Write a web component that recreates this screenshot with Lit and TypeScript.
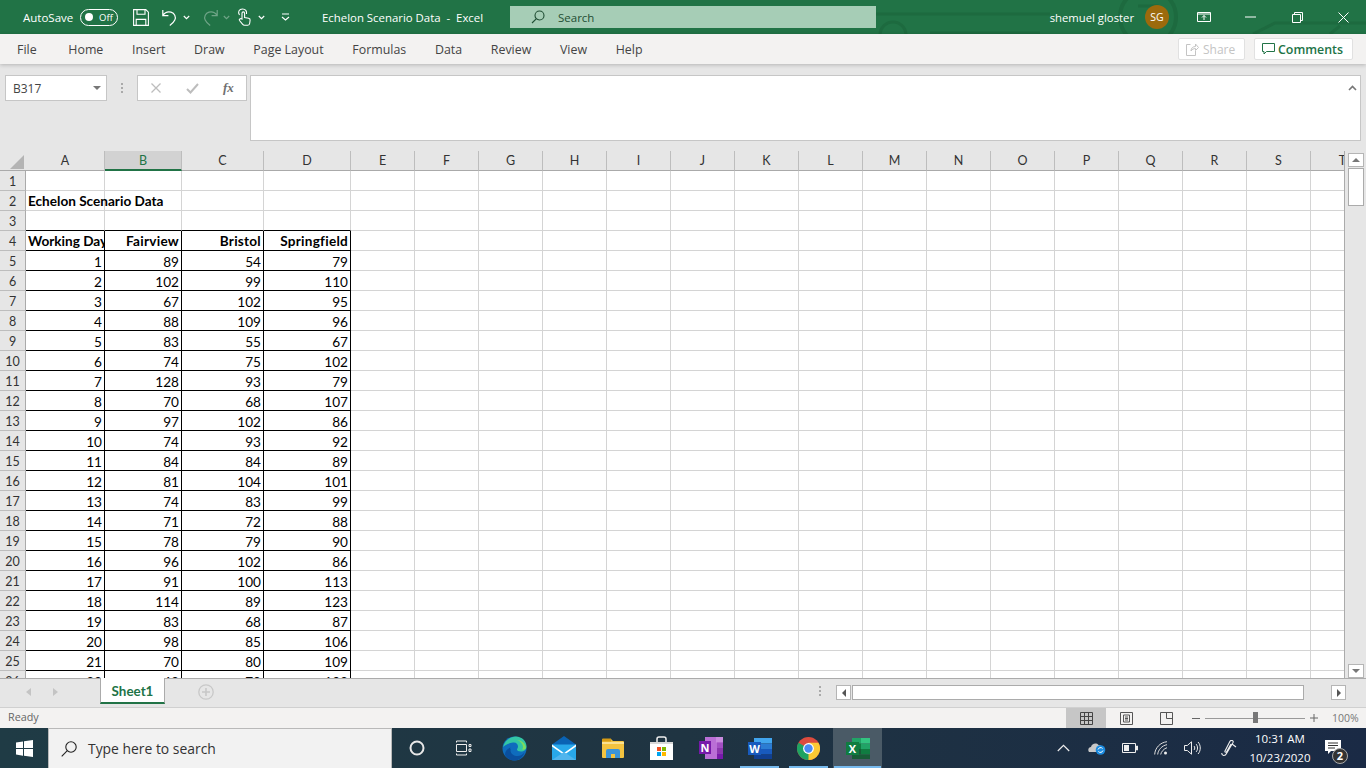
import { LitElement, html, css, svg } from "lit";
import { customElement } from "lit/decorators.js";

const COLS = [
  ["A", 79], ["B", 77], ["C", 82], ["D", 87], ["E", 64], ["F", 64], ["G", 64], ["H", 64], ["I", 64], ["J", 64],
  ["K", 64], ["L", 64], ["M", 64], ["N", 64], ["O", 64], ["P", 64], ["Q", 64], ["R", 64], ["S", 64], ["T", 64],
] as [string, number][];

const DATA = [
  [89, 54, 79], [102, 99, 110], [67, 102, 95], [88, 109, 96], [83, 55, 67], [74, 75, 102], [128, 93, 79],
  [70, 68, 107], [97, 102, 86], [74, 93, 92], [84, 84, 89], [81, 104, 101], [74, 83, 99], [71, 72, 88],
  [78, 79, 90], [96, 102, 86], [91, 100, 113], [114, 89, 123], [83, 68, 87], [98, 85, 106], [70, 80, 109],
  [63, 70, 103],
];

const TABS = ["File", "Home", "Insert", "Draw", "Page Layout", "Formulas", "Data", "Review", "View", "Help"];

const caret = svg`<svg width="7" height="5" viewBox="0 0 7 5"><path d="M.8 1l2.7 2.6L6.2 1" fill="none" stroke="currentColor" stroke-width="1.2"/></svg>`;

@customElement("app-root")
export class AppRoot extends LitElement {
  static styles = css`
    :host {
      display: flex;
      flex-direction: column;
      width: 1366px;
      height: 768px;
      overflow: hidden;
      font-family: "Open Sans", "Noto Sans", sans-serif;
      color: #444;
      background: #e6e6e6;
    }
    svg { display: block; flex: none; }

    /* title bar */
    .title {
      position: relative;
      flex: none;
      height: 34px;
      background: #217346;
      color: #fff;
      display: flex;
      align-items: center;
      font-size: 11.5px;
      overflow: hidden;
    }
    .title > * { position: relative; }
    .title .decor { position: absolute; left: 0; top: 0; }
    .autosave { margin-left: 23px; width: 57px; font-size: 11.5px; }
    .toggle {
      height: 15px;
      border: 1px solid #fff;
      border-radius: 9px;
      display: flex;
      align-items: center;
      padding-left: 4px;
      gap: 6px;
      font-size: 9.5px;
      box-sizing: content-box;
      width: 32px;
    }
    .toggle i { width: 8px; height: 8px; border-radius: 50%; background: #fff; flex: none; }
    .qat-save { margin-left: 15px; }
    .qat-undo { margin-left: 13px; }
    .c1 { margin-left: 6px; }
    .qat-redo { margin-left: 13px; opacity: .35; }
    .c2 { margin-left: 5px; opacity: .35; }
    .qat-touch { margin-left: 7px; }
    .c3 { margin-left: 7px; }
    .qat-more { margin-left: 16px; }
    .doc { margin-left: 32px; width: 188px; font-size: 11.4px; white-space: pre; }
    .search {
      width: 366px;
      height: 22px;
      background: #a6cdb6;
      color: #1f4d33;
      display: flex;
      align-items: center;
      gap: 13px;
      padding-left: 21px;
      box-sizing: border-box;
      font-size: 11.5px;
    }
    .user { margin-left: auto; font-size: 11.3px; }
    .avatar {
      margin-left: 11px;
      width: 24px;
      height: 24px;
      border-radius: 50%;
      background: #9c6a0c;
      display: flex;
      align-items: center;
      justify-content: center;
      font-size: 10.5px;
    }
    .win { display: flex; align-items: center; margin: 0 -1px 0 12px; }
    .win div { width: 46.5px; display: flex; justify-content: center; }

    /* ribbon tabs */
    .tabs {
      position: relative;
      z-index: 1;
      flex: none;
      height: 30px;
      background: #f3f2f1;
      box-shadow: 0 1px 4px rgba(0, 0, 0, .22);
      display: flex;
      align-items: center;
      gap: 28.7px;
      padding-left: 17px;
      font-size: 12.4px;
      color: #444;
    }
    .tabs > span:first-child { margin-right: 3px; }
    .btns { margin-left: auto; margin-right: 13px; display: flex; gap: 9px; }
    .btn {
      height: 22px;
      background: #fff;
      border: 1px solid #e1e1e1;
      border-radius: 2px;
      box-sizing: border-box;
      display: flex;
      align-items: center;
      gap: 4px;
      font-size: 12px;
    }
    .share { width: 67px; color: #c4c4c4; padding-left: 7px; }
    .comments { width: 99px; color: #217346; padding-left: 7px; gap: 3px; font-size: 12.4px; font-weight: 600; }

    /* formula bar */
    .fbar {
      flex: none;
      height: 87px;
      box-sizing: border-box;
      padding: 11px 5px 0;
      display: flex;
      align-items: flex-start;
    }
    .namebox {
      width: 102px;
      height: 26px;
      box-sizing: border-box;
      background: #fff;
      border: 1px solid #c6c6c6;
      display: flex;
      align-items: center;
      justify-content: space-between;
      padding: 0 5px 0 7px;
      font-size: 12px;
    }
    .arrow { width: 0; height: 0; border: 4px solid transparent; border-top: 4px solid #777; border-bottom: 0; }
    .dots { width: 30px; display: flex; justify-content: center; padding-top: 8px; }
    .fx {
      width: 110px;
      height: 26px;
      box-sizing: border-box;
      background: #fff;
      border: 1px solid #c6c6c6;
      display: flex;
      align-items: center;
      padding-left: 12px;
      gap: 24px;
    }
    .fx em { font: italic bold 13px "Liberation Serif", serif; color: #707070; }
    .finput {
      margin-left: 3px;
      flex: 1;
      height: 66px;
      box-sizing: border-box;
      background: #fff;
      border: 1px solid #c6c6c6;
      display: flex;
      justify-content: flex-end;
      padding: 9px 3px 0 0;
    }

    /* sheet */
    .sheet { flex: 1; min-height: 0; display: flex; }
    .gridwrap { width: 1345px; overflow: hidden; box-sizing: border-box; border-right: 1px solid #ababab; }
    .grid {
      display: grid;
      grid-auto-rows: 20px;
      font: 13.6px/20px Lato, "Liberation Sans", sans-serif;
      font-variant-ligatures: none;
      color: #000;
    }
    .corner { background: #e6e6e6; display: flex; align-items: flex-end; justify-content: flex-end; padding: 0 2px 1px 0; box-sizing: border-box; border-bottom: 1px solid #aaa; }
    .ch {
      background: #e6e6e6;
      border-right: 1px solid #bdbdbd;
      border-bottom: 1px solid #aaa;
      box-sizing: border-box;
      text-align: center;
      color: #333;
      font-size: 12.5px;
      line-height: 19px;
      overflow: hidden;
    }
    .ch.sel { background: #d2d2d2; color: #217346; border-bottom: 2px solid #217346; }
    .rh {
      background: #e6e6e6;
      border-bottom: 1px solid #bdbdbd;
      border-right: 1px solid #aaa;
      box-sizing: border-box;
      color: #333;
      font-size: 12.5px;
      line-height: 21px;
      text-align: center;
      overflow: hidden;
    }
    .cell {
      background: #fff;
      border-right: 1px solid #d4d4d4;
      border-bottom: 1px solid #d4d4d4;
      box-sizing: border-box;
      padding: 0 2px;
      white-space: nowrap;
      line-height: 22px;
    }
    .num { text-align: right; }
    .b { font-weight: 700; line-height: 21px; }
    .b.num { letter-spacing: .25px; }
    .r { border-right-color: #000; }
    .u { border-bottom-color: #000; }
    .clip { overflow: hidden; }
    .over { overflow: visible; position: relative; z-index: 1; }

    .vscroll {
      flex: 1;
      display: flex;
      flex-direction: column;
      align-items: center;
      padding-top: 2px;
    }
    .sbtn {
      width: 16px;
      height: 14px;
      background: #fff;
      border: 1px solid #b5b5b5;
      box-sizing: border-box;
      display: flex;
      align-items: center;
      justify-content: center;
    }
    .thumb {
      width: 16px;
      height: 38px;
      margin-top: 1px;
      background: #fff;
      border: 1px solid #ababab;
      box-sizing: border-box;
    }
    .vscroll .sbtn.down { margin-top: auto; }
    .up { width: 0; height: 0; border: 4px solid transparent; border-bottom: 4px solid #777; border-top: 0; }
    .dn { width: 0; height: 0; border: 4px solid transparent; border-top: 4px solid #777; border-bottom: 0; }
    .lf { width: 0; height: 0; border: 4px solid transparent; border-right: 4px solid #555; border-left: 0; }
    .rt { width: 0; height: 0; border: 4px solid transparent; border-left: 4px solid #555; border-right: 0; }

    /* sheet tabs */
    .sheetbar {
      flex: none;
      height: 29px;
      box-sizing: border-box;
      border-top: 1px solid #ababab;
      display: flex;
      align-items: flex-start;
      background: #e6e6e6;
    }
    .nav { width: 100px; display: flex; padding: 9px 0 0 26px; box-sizing: border-box; gap: 22px; }
    .nav i { width: 0; height: 0; border: 4px solid transparent; }
    .nav i.l { border-right: 5px solid #c4c4c4; border-left: 0; }
    .nav i.g { border-left: 5px solid #c4c4c4; border-right: 0; }
    .stab {
      margin-top: -1px;
      width: 65px;
      height: 26px;
      box-sizing: border-box;
      background: #fff;
      border-left: 1px solid #ababab;
      border-right: 1px solid #ababab;
      border-bottom: 2px solid #217346;
      color: #217346;
      font: 700 13.4px/26px Lato, sans-serif;
      text-align: center;
    }
    .plus { margin: 5px 0 0 33px; }
    .vdots { margin: 7px 0 0 598px; width: 24px; padding-left: 7px; box-sizing: border-box; display: flex; }
    .hscroll { display: flex; margin-top: 6px; }
    .hscroll .sbtn { width: 15px; height: 15px; }
    .hthumb { width: 452px; height: 15px; background: #fff; border: 1px solid #ababab; box-sizing: border-box; margin-left: 1px; }
    .hscroll .gap { width: 27px; }

    /* status */
    .status {
      flex: none;
      height: 21px;
      border-top: 1px solid #d0d0d0;
      box-sizing: border-box;
      background: #f3f2f1;
      display: flex;
      align-items: center;
      padding-left: 8px;
      font-size: 10.8px;
      line-height: 18px;
      color: #666;
    }
    .ready { margin-top: -2px; }
    .views { margin-left: auto; display: flex; align-self: stretch; }
    .views div { width: 40px; display: flex; align-items: center; justify-content: center; }
    .views .on { background: #c6c6c6; }
    .zoom { display: flex; align-items: center; margin-left: 6px; width: 174px; }
    .zoom .track { position: relative; width: 100px; height: 1px; background: #999; margin: 0 5px; }
    .zoom .track i { position: absolute; left: 48px; top: -6px; width: 5px; height: 11px; background: #777; }
    .pct { margin-left: 14px; font-size: 10.5px; color: #777; }

    /* taskbar */
    .taskbar {
      flex: none;
      height: 40px;
      background: linear-gradient(90deg, #1f3b45, #1f3442 50%, #1a2a45);
      display: flex;
      align-items: stretch;
      color: #fff;
    }
    .start { width: 48px; display: flex; align-items: center; justify-content: center; }
    .tsearch {
      width: 344px;
      box-sizing: border-box;
      background: #f2f2f2;
      border: 1px solid #b9b9b9;
      border-bottom: 0;
      display: flex;
      align-items: center;
      gap: 11px;
      padding-left: 12px;
      color: #333;
      font-size: 13.9px;
    }
    .ti { position: relative; width: 49px; display: flex; align-items: center; justify-content: center; box-sizing: border-box; }
    .ti.open::after { content: ""; position: absolute; left: 5px; right: 5px; bottom: 0; height: 2px; background: #76b9ed; }
    .ti.active { background: #4a5a66; }
    .ti.active::after { left: 1px; right: 1px; }
    .tv { margin-right: 4px; }
    .tray { margin-left: auto; display: flex; align-items: center; }
    .ml18 { margin-left: 18px; }
    .ml16 { margin-left: 16px; }
    .ml20 { margin-left: 20px; }
    .clock { width: 62px; text-align: center; font-size: 11.5px; line-height: 19px; margin-left: 12px; }
    .note { position: relative; margin: 0 17px 0 14px; width: 24px; height: 26px; }
    .note svg { margin-top: 5px; }
    .badge {
      position: absolute;
      left: 7px;
      top: 13px;
      width: 16px;
      height: 16px;
      box-sizing: border-box;
      border-radius: 50%;
      background: #333;
      border: 1px solid #aaa;
      font-size: 11px;
      font-weight: 700;
      line-height: 14px;
      text-align: center;
    }
  `;

  private titleBar() {
    return html`<div class="title">
      <svg class="decor" width="1366" height="34" fill="none" stroke="#1d6a3f" stroke-width="3">
        <path d="M876 14H1050M930 33H1040"/>
        <circle cx="893" cy="35" r="13"/>
        <circle cx="1148" cy="17" r="28" stroke-width="4"/>
        <path d="M1138 6h18l-8 14M1253 34l22-11h91M1330 34l10-8"/>
      </svg>
      <span class="autosave">AutoSave</span>
      <span class="toggle"><i></i>Off</span>
      <svg class="qat-save" width="16" height="17" viewBox="0 0 16 17" fill="none" stroke="#fff" stroke-width="1.1">
        <path d="M.6.6h12.2l2.6 2.6v13.2H.6zM4 .6v4.6h8V.6M3.2 16.4v-6h9.6v6"/>
      </svg>
      <svg class="qat-undo" width="15" height="17" viewBox="0 0 15 17" fill="none" stroke="#fff" stroke-width="1.2">
        <path d="M.8 1v5.6h5.6M1 6.4C3 3.4 6 2.4 9 3.2c3.600 1 5.200 4.600 3.800 7.800-.8 1.800-3 4-5 5.400"/>
      </svg>
      <span class="c1">${caret}</span>
      <svg class="qat-redo" width="15" height="17" viewBox="0 0 15 17" fill="none" stroke="#fff" stroke-width="1.2">
        <path d="M14.200 1v5.600H8.600M14 6.400C12 3.400 9 2.400 6 3.200 2.400 4.200.8 7.800 2.200 11c.8 1.800 3 4 5 5.400"/>
      </svg>
      <span class="c2">${caret}</span>
      <svg class="qat-touch" width="14" height="18" viewBox="0 0 14 18" fill="none" stroke="#fff" stroke-width="1.1">
        <path d="M2.500 7C.5 4 2 1 5.500 1 8.500 1 10 3 9.500 6"/>
        <path d="M5 11V5.200a1.300 1.300 0 012.600 0v4.300l4 .8c1 .2 1.600 1 1.500 2l-.4 3c-.1 1-.7 2-2 2H7.500c-1 0-1.500-.5-2-1.200l-3-3.600c-.8-1.200.8-2.500 2.500-1.500z"/>
      </svg>
      <span class="c3">${caret}</span>
      <svg class="qat-more" width="9" height="8" viewBox="0 0 9 8" fill="none" stroke="#fff" stroke-width="1.1">
        <path d="M1 1h7M1 4l3.500 3L8 4"/>
      </svg>
      <span class="doc">Echelon Scenario Data  -  Excel</span>
      <div class="search">
        <svg width="14" height="14" viewBox="0 0 14 14" fill="none" stroke="#1f4d33" stroke-width="1.1">
          <circle cx="8.500" cy="5.500" r="4.500"/><path d="M5.200 8.800L1 13"/>
        </svg>
        Search
      </div>
      <span class="user">shemuel gloster</span>
      <span class="avatar">SG</span>
      <div class="win">
        <div>
          <svg width="14" height="12" viewBox="0 0 14 12" fill="none" stroke="#fff" stroke-width="1">
            <path d="M.5 1.500h13v9H.5zM.5 3h13M7 9V4.500M5 6.500l2-2 2 2"/>
          </svg>
        </div>
        <div>
          <svg width="11" height="2"><path d="M0 1h11" stroke="#fff"/></svg>
        </div>
        <div>
          <svg width="11" height="11" fill="none" stroke="#fff"><path d="M.5 2.500h8v8h-8zM2.500 2.500v-2h8v8h-2"/></svg>
        </div>
        <div>
          <svg width="11" height="11" fill="none" stroke="#fff"><path d="M.5.500l10 10M10.500.500l-10 10"/></svg>
        </div>
      </div>
    </div>`;
  }

  private tabs() {
    return html`<div class="tabs">
      ${TABS.map((t) => html`<span>${t}</span>`)}
      <div class="btns">
        <div class="btn share">
          <svg width="13" height="13" viewBox="0 0 13 13" fill="none" stroke="#c4c4c4">
            <path d="M4.500 1.500H.5v11h9V8M5 8c0-3 2-4.500 4.500-4.500V1l3 3.500-3 3V5.500C7.500 5.500 6 6.500 5 8z"/>
          </svg>
          Share
        </div>
        <div class="btn comments">
          <svg width="13" height="12" viewBox="0 0 13 12" fill="none" stroke="#217346">
            <path d="M.5.500h12v8H4.500L2 11V8.500H.5z"/>
          </svg>
          Comments
        </div>
      </div>
    </div>`;
  }

  private formulaBar() {
    return html`<div class="fbar">
      <div class="namebox">B317<span class="arrow"></span></div>
      <div class="dots">
        <svg width="2" height="10"><path d="M1 0v2M1 4v2M1 8v2" stroke="#aaa" stroke-width="2"/></svg>
      </div>
      <div class="fx">
        <svg width="12" height="12" viewBox="0 0 12 12" fill="none" stroke="#bdbdbd" stroke-width="1.3"><path d="M1.500 1.500l9 9M10.500 1.500l-9 9"/></svg>
        <svg width="13" height="11" viewBox="0 0 13 11" fill="none" stroke="#bdbdbd" stroke-width="2"><path d="M1 6l3.500 3.500L12 1"/></svg>
        <em>fx</em>
      </div>
      <div class="finput">
        <svg width="9" height="6" viewBox="0 0 9 6" fill="none" stroke="#777" stroke-width="1.600"><path d="M1 5l3.500-3.500L8 5"/></svg>
      </div>
    </div>`;
  }

  private sheet() {
    const template = `26px ${COLS.map((c) => c[1] + "px").join(" ")}`;
    const blank = (row: number) =>
      COLS.map(([, ], i) => {
        // row 3 carries the top edge of the table
        const top = row === 3 && i < 4 ? "u" : "";
        return html`<div class="cell ${top}"></div>`;
      });
    return html`<div class="sheet">
      <div class="gridwrap">
        <div class="grid" style="grid-template-columns:${template}">
          <div class="corner">
            <svg width="14" height="14"><path d="M14 0v14H0z" fill="#b4b4b4"/></svg>
          </div>
          ${COLS.map(([c]) => html`<div class="ch ${c === "B" ? "sel" : ""}">${c}</div>`)}
          <div class="rh">1</div>${blank(1)}
          <div class="rh">2</div>
          <div class="cell b over">Echelon Scenario Data</div>
          ${blank(2).slice(1)}
          <div class="rh">3</div>${blank(3)}
          <div class="rh">4</div>
          <div class="cell b clip r u">Working Day</div>
          <div class="cell b num r u">Fairview</div>
          <div class="cell b num r u">Bristol</div>
          <div class="cell b num r u">Springfield</div>
          ${COLS.slice(4).map(() => html`<div class="cell"></div>`)}
          ${DATA.map(
            (d, i) => html`<div class="rh">${i + 5}</div>
              <div class="cell num r u">${i + 1}</div>
              ${d.map((v) => html`<div class="cell num r u">${v}</div>`)}
              ${COLS.slice(4).map(() => html`<div class="cell"></div>`)}`
          )}
        </div>
      </div>
      <div class="vscroll">
        <div class="sbtn"><i class="up"></i></div>
        <div class="thumb"></div>
        <div class="sbtn down"><i class="dn"></i></div>
      </div>
    </div>`;
  }

  private sheetBar() {
    return html`<div class="sheetbar">
      <div class="nav"><i class="l"></i><i class="g"></i></div>
      <div class="stab">Sheet1</div>
      <svg class="plus" width="16" height="16" viewBox="0 0 16 16" fill="none" stroke="#c8c8c8" stroke-width="1.300">
        <circle cx="8" cy="8" r="7.200"/><path d="M8 4v8M4 8h8" stroke-width="1.600"/>
      </svg>
      <div class="vdots">
        <svg width="2" height="10"><path d="M1 0v2M1 4v2M1 8v2" stroke="#aaa" stroke-width="2"/></svg>
      </div>
      <div class="hscroll">
        <div class="sbtn"><i class="lf"></i></div>
        <div class="hthumb"></div>
        <div class="gap"></div>
        <div class="sbtn"><i class="rt"></i></div>
      </div>
    </div>`;
  }

  private statusBar() {
    return html`<div class="status">
      <span class="ready">Ready</span>
      <div class="views">
        <div class="on">
          <svg width="13" height="13" fill="none" stroke="#444"><path d="M.5.500h12v12H.5zM.5 4.500h12M.5 8.500h12M4.500.500v12M8.500.500v12"/></svg>
        </div>
        <div>
          <svg width="13" height="13" fill="none" stroke="#555"><path d="M.5.500h12v12H.5zM3.500 3h6v7h-6zM5 5h3M5 6.500h3M5 8h3"/></svg>
        </div>
        <div>
          <svg width="13" height="13" fill="none" stroke="#555"><path d="M.5.500h12v12H.5zM6.500.500v6h6"/></svg>
        </div>
      </div>
      <div class="zoom">
        <svg width="8" height="1"><path d="M0 .5h8" stroke="#666"/></svg>
        <div class="track"><i></i></div>
        <svg width="8" height="8"><path d="M0 4h8M4 0v8" stroke="#666"/></svg>
        <span class="pct">100%</span>
      </div>
    </div>`;
  }

  private taskbar() {
    return html`<div class="taskbar">
      <div class="start">
        <svg width="17" height="17" viewBox="0 0 17 17" fill="#fff">
          <path d="M0 2.400L7 1.400v6.700H0zM8 1.200L17 0v8.100H8zM0 9h7v6.700L0 14.600zM8 9h9v8l-9-1.200z"/>
        </svg>
      </div>
      <div class="tsearch">
        <svg width="16" height="16" viewBox="0 0 16 16" fill="none" stroke="#222" stroke-width="1.100">
          <circle cx="10" cy="6" r="5.200"/><path d="M6.300 9.700L.7 15.300"/>
        </svg>
        Type here to search
      </div>
      <div class="ti">
        <svg width="16" height="16" fill="none" stroke="#e8e8e8" stroke-width="2"><circle cx="8" cy="8" r="6.500"/></svg>
      </div>
      <div class="ti">
        <svg class="tv" width="16" height="16" viewBox="0 0 16 16" fill="none" stroke="#eee">
          <path d="M.5 1h10M.5 15h10M.5 4.500h10v7H.5zM13 4.500h2v2h-2zM13 9h2v2.500h-2zM10.500 1v1.500M10.500 13.500V15M.5 1v1.500M.5 13.500V15"/>
        </svg>
      </div>
      <div class="ti">
        <svg width="25" height="25" viewBox="0 0 25 25">
          <circle cx="12.500" cy="12.500" r="12" fill="#0f6cbd"/>
          <path d="M1 11C3 3 10 .3 14 .5c6 .3 10.500 4.500 10.500 10 0 3-2.500 5-5.500 5-2.500 0-4-1-4-2 0-.8 1-1.200 1-3C16 8 14 6 11 6.500 6 7.300 3 9 1 11z" fill="#33c6a5"/>
          <path d="M24 12c-.5-5-5-8-9-8 3 1 6 4 6 7 0 1-.5 2-1 2.500 2 .5 4-.5 4-1.500z" fill="#7cdc5f"/>
          <path d="M8.500 14c0 4 3.500 6 7 6 2.500 0 5-1 7-3.500-1.500 5-6 8-10 8-4 0-8-2-9.500-6 0-3 2-6 5.500-7-.5 1-.5 1.500.5 2.500z" fill="#0a4f9e"/>
        </svg>
      </div>
      <div class="ti">
        <svg width="24" height="24" viewBox="0 0 24 24">
          <path d="M0 8.500L12 0l12 8.500V24H0z" fill="#0a63b4"/>
          <path d="M0 8.500h24V24H0z" fill="#28a8ea"/>
          <path d="M0 8.500L12 17l12-8.500v2L12 19 0 10.500z" fill="#fff"/>
          <path d="M0 24l12-8 12 8z" fill="#50b5ed"/>
        </svg>
      </div>
      <div class="ti">
        <svg width="22" height="20" viewBox="0 0 22 20">
          <path d="M0 2a1 1 0 011-1h8l2 2h10a1 1 0 011 1v15a1 1 0 01-1 1H1a1 1 0 01-1-1z" fill="#f3c340"/>
          <path d="M0 1.500a1 1 0 011-1h8v3H0z" fill="#d69b15"/>
          <path d="M0 4h22v2H0z" fill="#fbe190"/>
          <path d="M4 20v-7a2 2 0 012-2h10a2 2 0 012 2v7h-5v-4H9v4z" fill="#3b94d9"/>
        </svg>
      </div>
      <div class="ti">
        <svg width="23" height="24" viewBox="0 0 23 24">
          <path d="M7 6V3a2 2 0 012-2h5a2 2 0 012 2v3" fill="none" stroke="#eee" stroke-width="1.500"/>
          <path d="M0 6h23v18H0z" fill="#fff"/>
          <path d="M0 6h23v2H0z" fill="#d8d8d8"/>
          <path d="M7 11h4v4H7z" fill="#f25022"/><path d="M12 11h4v4h-4z" fill="#7fba00"/>
          <path d="M7 16h4v4H7z" fill="#00a4ef"/><path d="M12 16h4v4h-4z" fill="#ffb900"/>
        </svg>
      </div>
      <div class="ti">
        <svg width="24" height="22" viewBox="0 0 24 22">
          <path d="M6 0h18v22H6z" fill="#ba6fd6"/>
          <path d="M17 0h7v5.500h-7z" fill="#c98bdf"/>
          <path d="M18 5.500h6v5.500h-6z" fill="#a24fc3"/>
          <path d="M18 11h6v5.500h-6z" fill="#8c37ae"/>
          <path d="M18 16.500h6V22h-6z" fill="#7719aa"/>
          <path d="M0 4h12v13H0z" fill="#7719aa"/>
          <text x="6" y="14.500" font-size="11" font-weight="700" font-family="Open Sans, sans-serif" fill="#fff" text-anchor="middle">N</text>
        </svg>
      </div>
      <div class="ti open">
        <svg width="24" height="21" viewBox="0 0 24 21">
          <path d="M6 0h18v5.500H6z" fill="#41a5ee"/>
          <path d="M6 5.500h18V11H6z" fill="#2b7cd3"/>
          <path d="M6 11h18v5.500H6z" fill="#185abd"/>
          <path d="M6 16.500h18V21H6z" fill="#103f91"/>
          <path d="M0 4h13v13H0z" fill="#185abd"/>
          <text x="6.500" y="14.800" font-size="11" font-weight="700" font-family="Open Sans, sans-serif" fill="#fff" text-anchor="middle">W</text>
        </svg>
      </div>
      <div class="ti open">
        <svg width="23" height="23" viewBox="0 0 23 23">
          <circle cx="11.500" cy="11.500" r="11.500" fill="#dd4b3e"/>
          <path d="M11.500 11.500L1.540 5.750A11.500 11.500 0 00 11.500 23l5.700-9.900z" fill="#1ea362"/>
          <path d="M11.500 11.500L11.500 23A11.500 11.500 0 0021.460 5.750H11.500z" fill="#fcc934"/>
          <circle cx="11.500" cy="11.500" r="5.400" fill="#fff"/>
          <circle cx="11.500" cy="11.500" r="4.200" fill="#4a8af4"/>
        </svg>
      </div>
      <div class="ti open active">
        <svg width="24" height="21" viewBox="0 0 24 21">
          <path d="M6 0h18v5.500H6z" fill="#33c481"/>
          <path d="M6 0h9v5.500H6z" fill="#21a366"/>
          <path d="M15 5.500h9V11h-9z" fill="#21a366"/>
          <path d="M6 5.500h9V11H6z" fill="#107c41"/>
          <path d="M15 11h9v5.500h-9z" fill="#107c41"/>
          <path d="M6 11h9v5.500H6z" fill="#185c37"/>
          <path d="M6 16.500h18V21H6z" fill="#185c37"/>
          <path d="M0 4h13v13H0z" fill="#107c41"/>
          <text x="6.500" y="14.800" font-size="11" font-weight="700" font-family="Open Sans, sans-serif" fill="#fff" text-anchor="middle">X</text>
        </svg>
      </div>
      <div class="tray">
        <svg width="13" height="8" viewBox="0 0 13 8" fill="none" stroke="#eee" stroke-width="1.200"><path d="M.8 7l5.700-5.700L12.200 7"/></svg>
        <svg class="ml18" width="18" height="14" viewBox="0 0 18 14">
          <path d="M1 11C-.5 9 .5 6 3 6c.5-3 5-5 7.500-2 2 0 3 1 3.500 2.500L8 11z" fill="#c8c8c8"/>
          <circle cx="12.500" cy="9" r="4.800" fill="#1b8be0"/>
          <path d="M10 8.500a2.700 2.700 0 014.600-1M15 9.500a2.700 2.700 0 01-4.600 1" fill="none" stroke="#fff" stroke-width="1"/>
        </svg>
        <svg class="ml16" width="16" height="10" viewBox="0 0 16 10" fill="none" stroke="#eee">
          <path d="M.5.500h13v9H.5zM14.500 3v4h1V3z"/><path d="M2 2h5v6H2z" fill="#eee" stroke="none"/>
        </svg>
        <svg class="ml16" width="14" height="14" viewBox="0 0 14 14" fill="none" stroke="#ddd">
          <path d="M.7 13.500C1 7 6 1.500 13 .7M3.700 13.500C4 9 8 4.500 13 3.700M6.700 13.500C7 11 10 7.500 13 6.700"/>
          <circle cx="11.500" cy="12" r="1.500" fill="#eee" stroke="none"/>
        </svg>
        <svg class="ml16" width="17" height="14" viewBox="0 0 17 14" fill="none" stroke="#eee">
          <path d="M.5 4.500h2.800L7.500.8v12.400L3.300 9.500H.5zM10 5c1 1 1 3 0 4M12 3c2 2 2 6 0 8M14 1c3 3 3 9 0 12"/>
        </svg>
        <svg class="ml20" width="16" height="17" viewBox="0 0 16 17" fill="none" stroke="#eee" stroke-width="1.100">
          <path d="M.7 13c0 3 3.500 3.300 4.800.5L12 2.500c1-2-2-3-3-1.200L4 11c-.5 1 1 1.700 1.600.7L10 4M11 4l4 3"/>
        </svg>
        <div class="clock">10:31 AM<br />10/23/2020</div>
        <div class="note">
          <svg width="16" height="14" viewBox="0 0 16 14">
            <path d="M0 0h16v11H6l-3 3v-3H0z" fill="#fff"/>
            <path d="M3 3h10M3 5.500h10M3 8h7" stroke="#333"/>
          </svg>
          <span class="badge">2</span>
        </div>
      </div>
    </div>`;
  }

  render() {
    return html`
      ${this.titleBar()}
      ${this.tabs()}
      ${this.formulaBar()}
      ${this.sheet()}
      ${this.sheetBar()}
      ${this.statusBar()}
      ${this.taskbar()}
    `;
  }
}
